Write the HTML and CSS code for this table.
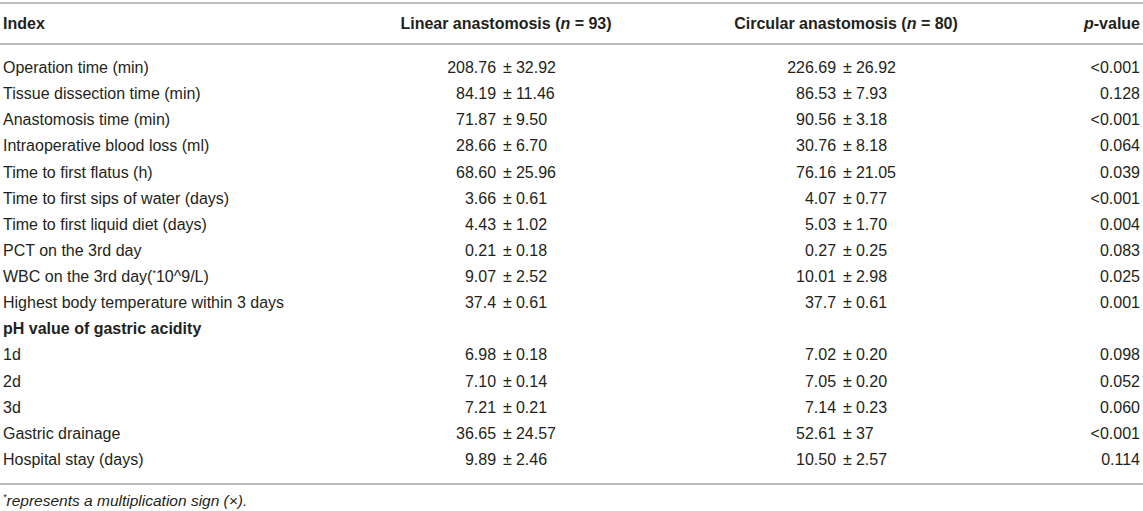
FILE: index.html
```html
<!DOCTYPE html>
<html lang="en">
<head>
    <meta charset="UTF-8">
    <title>Linear vs circular anastomosis</title>
    <link rel="stylesheet" href="styles.css">
</head>
<body>
    <div class="tbl">
        <div class="row head">
            <div class="cell">Index</div>
            <div class="cell mid">Linear anastomosis (<i>n</i> = 93)</div>
            <div class="cell mid">Circular anastomosis (<i>n</i> = 80)</div>
            <div class="cell end"><i>p</i>-value</div>
        </div>
        <div class="body" id="rows"></div>
    </div>
    <p class="note"><sup>*</sup>represents a multiplication sign (×).</p>

    <script>
        const data = [
            ["Operation time (min)", "208.76", "32.92", "226.69", "26.92", "<0.001"],
            ["Tissue dissection time (min)", "84.19", "11.46", "86.53", "7.93", "0.128"],
            ["Anastomosis time (min)", "71.87", "9.50", "90.56", "3.18", "<0.001"],
            ["Intraoperative blood loss (ml)", "28.66", "6.70", "30.76", "8.18", "0.064"],
            ["Time to first flatus (h)", "68.60", "25.96", "76.16", "21.05", "0.039"],
            ["Time to first sips of water (days)", "3.66", "0.61", "4.07", "0.77", "<0.001"],
            ["Time to first liquid diet (days)", "4.43", "1.02", "5.03", "1.70", "0.004"],
            ["PCT on the 3rd day", "0.21", "0.18", "0.27", "0.25", "0.083"],
            ["WBC on the 3rd day(<sup>*</sup>10^9/L)", "9.07", "2.52", "10.01", "2.98", "0.025"],
            ["Highest body temperature within 3 days", "37.4", "0.61", "37.7", "0.61", "0.001"],
            ["<b>pH value of gastric acidity</b>"],
            ["1d", "6.98", "0.18", "7.02", "0.20", "0.098"],
            ["2d", "7.10", "0.14", "7.05", "0.20", "0.052"],
            ["3d", "7.21", "0.21", "7.14", "0.23", "0.060"],
            ["Gastric drainage", "36.65", "24.57", "52.61", "37", "<0.001"],
            ["Hospital stay (days)", "9.89", "2.46", "10.50", "2.57", "0.114"]
        ];

        function pm(a, b) {
            return `<div class="cell mid"><span class="pm"><span class="l">${a}</span><span class="s">±</span><span class="r">${b}</span></span></div>`;
        }

        const rows = document.getElementById("rows");
        data.forEach(d => {
            let html = `<div class="cell">${d[0]}</div>`;
            if (d.length > 1) {
                html += pm(d[1], d[2]) + pm(d[3], d[4]);
                html += `<div class="cell end">${d[5].replace("<", "&lt;")}</div>`;
            } else {
                html += `<div class="cell"></div><div class="cell"></div><div class="cell"></div>`;
            }
            const row = document.createElement("div");
            row.className = "row";
            row.innerHTML = html;
            rows.appendChild(row);
        });
    </script>
</body>
</html>
```

FILE: styles.css
```css
body {
    margin: 0;
    background: #fff;
    color: #231f20;
    font-family: "Liberation Sans", Arial, sans-serif;
    font-size: 16px;
}

.tbl {
    margin-top: 2px;
    border-top: 2px solid #bcbcbc;
    border-bottom: 2px solid #bcbcbc;
}

.row {
    display: grid;
    grid-template-columns: 380px 252px 428px 1fr;
    height: 26.13px;
    align-items: center;
}

.cell {
    padding: 0 3px;
    white-space: nowrap;
}

.mid {
    text-align: center;
}

.end {
    text-align: right;
}

/* Cabeçalho */
.head {
    height: 39px;
    font-weight: bold;
    border-bottom: 2px solid #bcbcbc;
}

.body {
    padding: 10px 0 10px;
}

/* Valores média ± desvio, alinhados no sinal */
.pm {
    display: grid;
    grid-template-columns: 1fr auto 1fr;
}

.pm .l {
    text-align: right;
}

.pm .s {
    padding: 0 4px 0 7px;
}

.pm .r {
    text-align: left;
}

sup {
    font-size: 9px;
    vertical-align: 6px;
    line-height: 0;
}

.note {
    margin: 7px 0 0;
    padding: 0 3px;
    font-size: 15.5px;
    font-style: italic;
}
```
